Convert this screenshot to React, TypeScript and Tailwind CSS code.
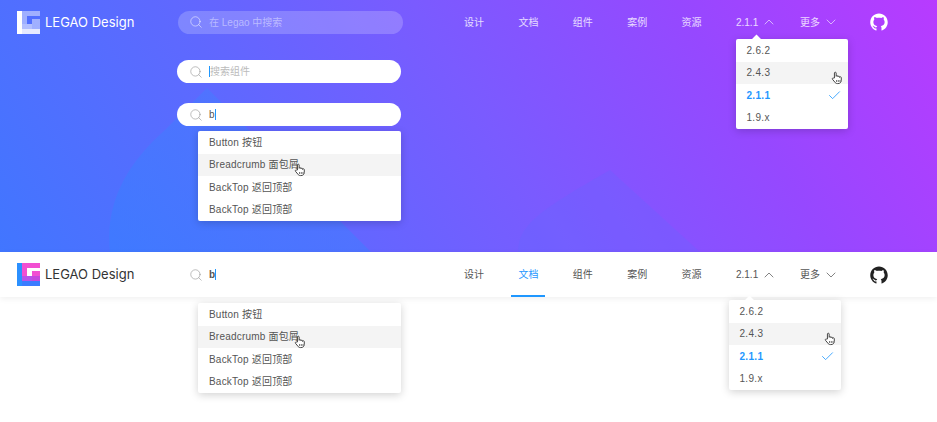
import { Check, ChevronDown, ChevronUp, Search } from "lucide-react";
import { AiFillGithub } from "react-icons/ai";

const font = "font-['Liberation_Sans','Noto_Sans_CJK_SC',sans-serif]";
const navItems = ["设计", "文档", "组件", "案例", "资源"];
const searchItems = ["Button 按钮", "Breadcrumb 面包屑", "BackTop 返回顶部", "BackTop 返回顶部"];
const versions = ["2.6.2", "2.4.3", "2.1.1", "1.9.x"];

function Hand({ className }: { className: string }) {
  return (
    <svg viewBox="0 0 14 16" className={className} fill="#fff" stroke="#3c3c3c" strokeWidth="1.100" strokeLinejoin="round">
      <path d="M4 8V2.200c0-1.300 2-1.300 2 0V6c0-1 2-1 2 0v.6c0-1 2-1 2 0v.7c0-1 2-.9 2 .2v3.200c0 2.300-1.500 3.800-3.800 3.800H7.500c-1.500 0-2.300-.6-3.100-1.800L1.700 9.500c-.7-1.100.7-2.200 1.600-1.200z" />
      <path d="M6.500 10.500v2M8.500 10.500v2M10.500 10.500v2" fill="none" strokeWidth="1" />
    </svg>
  );
}

function Logo({ light }: { light?: boolean }) {
  return (
    <div className="flex items-center gap-[5px]">
      <svg viewBox="0 0 23 23" className="w-[23px] h-[23px] shrink-0">
        {light ? (
          <>
            <path d="M5 0H23V5H10V13H15V8H23V18H5Z" fill="#fff" opacity=".45" />
            <path d="M5 13h10v5H5z" fill="#fff" opacity=".2" />
            <path d="M0 0h5v23H0z" fill="#fff" />
            <path d="M5 18h18v5H5z" fill="#fff" opacity=".85" />
          </>
        ) : (
          <>
            <path d="M5 0H23V5H10V13H15V8H23V18H5Z" fill="#f24fd2" />
            <path d="M15 13h8v5h-8z" fill="#c548de" />
            <path d="M5 13h10v5H5z" fill="#b553ea" />
            <path d="M0 0h5v23H0z" fill="#2b90ff" />
            <path d="M5 18h18v5H5z" fill="#3b7cff" />
          </>
        )}
      </svg>
      <span className={`font-['Inter',sans-serif] text-[13px] leading-[23px] whitespace-nowrap ${light ? "text-white" : "text-[#333]"}`}>
        LEGAO Design
      </span>
    </div>
  );
}

function Nav({ light }: { light?: boolean }) {
  const color = light ? "text-white/80" : "text-[#555]";
  return (
    <nav className={`flex items-center h-full text-[10px] ${color}`}>
      {navItems.map((item) => {
        const active = !light && item === "文档";
        return (
          <a key={item} className={`relative w-[54.400px] h-full flex items-center ${active ? "text-[#1f97ff]" : ""}`}>
            {item}
            {active && <span className="absolute left-[-7.500px] bottom-0 w-[34px] h-[2px] bg-[#1f97ff]" />}
          </a>
        );
      })}
      <span className="flex items-center w-[64px]">
        2.1.1
        <ChevronUp size={16} strokeWidth={1.100} className="ml-[3px]" />
      </span>
      <span className="flex items-center w-[69px]">
        更多
        <ChevronDown size={16} strokeWidth={1.100} className="ml-[3px]" />
      </span>
      <AiFillGithub size={20} className={light ? "text-white" : "text-[#222]"} />
    </nav>
  );
}

function SearchMenu({ className }: { className: string }) {
  return (
    <ul className={`absolute w-[203px] h-[90px] bg-white rounded-[2px] shadow-[0_2px_8px_rgba(0,0,0,0.18)] text-[10px] tracking-[0.2px] text-[#555] ${className}`}>
      {searchItems.map((item, i) => (
        <li key={i} className={`relative h-[22.500px] pl-[11px] flex items-center ${i === 1 ? "bg-[#f4f4f4]" : ""}`}>
          {item}
          {i === 1 && <Hand className="absolute left-[96px] top-[9px] w-[12px] h-[14px]" />}
        </li>
      ))}
    </ul>
  );
}

function VersionMenu({ className }: { className: string }) {
  return (
    <ul className={`absolute w-[112px] h-[90px] bg-white rounded-[2px] shadow-[0_2px_8px_rgba(0,0,0,0.18)] text-[10px] tracking-[0.3px] text-[#555] ${className}`}>
      <span className="absolute left-[17px] top-[-3px] w-[7px] h-[7px] bg-white rotate-45" />
      {versions.map((v, i) => (
        <li
          key={v}
          className={`relative h-[22.500px] pl-[10.500px] flex items-center ${i === 1 ? "bg-[#f4f4f4]" : ""} ${i === 2 ? "text-[#1f97ff] font-bold" : ""}`}
        >
          {v}
          {i === 1 && <Hand className="absolute left-[95px] top-[9px] w-[12px] h-[14px]" />}
          {i === 2 && <Check size={15} strokeWidth={1.300} className="absolute right-[6px] top-[4px]" />}
        </li>
      ))}
    </ul>
  );
}

function Pill({ placeholder, value }: { placeholder?: string; value?: string }) {
  return (
    <div className="h-[23px] w-[224px] bg-white rounded-full flex items-center pl-[12px] text-[10px]">
      <Search size={14} strokeWidth={1.100} className="text-[#999]" />
      <span className="ml-[6px] flex items-center">
        {!placeholder && <span className="text-[#555]">{value}</span>}
        <span className="w-px h-[11px] bg-[#1f97ff]" />
        {placeholder && <span className="text-[#bbb]">{placeholder}</span>}
      </span>
    </div>
  );
}

export default function App() {
  return (
    <div className={`w-[937px] h-[422px] overflow-hidden bg-white ${font}`}>
      <section className="relative h-[252px] overflow-hidden bg-[linear-gradient(58deg,#4176ff_0%,#5f68ff_30%,#7a5bff_52%,#9648ff_76%,#b83bff_100%)]">
        <svg viewBox="0 0 937 252" className="absolute inset-0 w-full h-full">
          <defs>
            <linearGradient id="blob" x1="0" y1="1" x2="1" y2="0">
              <stop offset="0" stopColor="#3580ff" />
              <stop offset="1" stopColor="#4d78ff" />
            </linearGradient>
          </defs>
          <path d="M110 252C105 205 125 165 165 130L207 88 371 252z" fill="url(#blob)" opacity=".55" />
          <path d="M518 252C518 225 540 210 610 170L700 252z" fill="#5a6cff" opacity=".22" />
        </svg>
        <header className="relative h-[44px] flex items-center pl-[17px]">
          <div className="w-[161px]">
            <Logo light />
          </div>
          <div className="h-[23px] w-[225px] rounded-full bg-white/20 flex items-center pl-[11px] text-[10px] text-white/45">
            <Search size={14} strokeWidth={1.100} className="text-white/80" />
            <span className="ml-[6px]">在 Legao 中搜索</span>
          </div>
          <div className="ml-[61px] h-full">
            <Nav light />
          </div>
        </header>
        <div className="relative ml-[177px] mt-[16px] flex flex-col gap-[20px]">
          <Pill placeholder="搜索组件" />
          <Pill value="b" />
        </div>
        <SearchMenu className="left-[198px] top-[131px]" />
        <VersionMenu className="left-[736px] top-[39px]" />
      </section>
      <section className="relative h-[170px]">
        <header className="relative h-[45px] flex items-center pl-[17px] shadow-[0_2px_6px_rgba(0,0,0,0.06)]">
          <div className="w-[172px]">
            <Logo />
          </div>
          <div className="w-[214px] flex items-center text-[10px]">
            <Search size={14} strokeWidth={1.100} className="text-[#999]" />
            <span className="ml-[6px] text-[#555] font-bold">b</span>
            <span className="w-px h-[11px] bg-[#1f97ff]" />
          </div>
          <div className="ml-[61px] h-full">
            <Nav />
          </div>
        </header>
        <SearchMenu className="left-[198px] top-[51px]" />
        <VersionMenu className="left-[729px] top-[48px]" />
      </section>
    </div>
  );
}
